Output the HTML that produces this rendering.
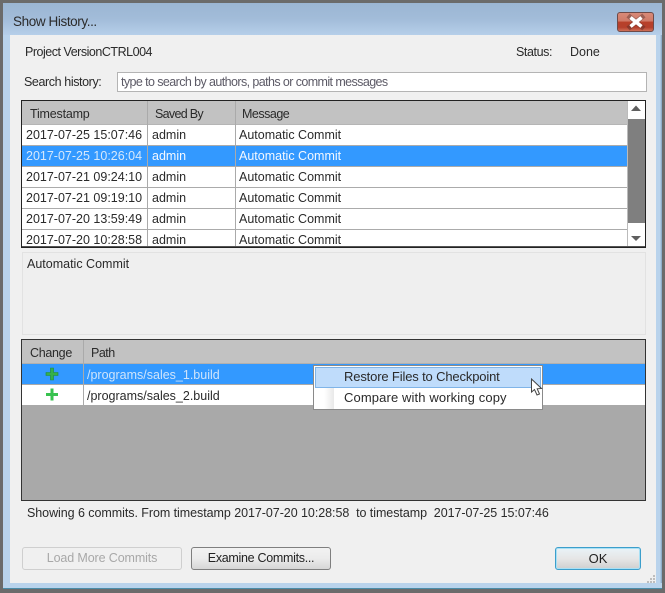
<!DOCTYPE html>
<html><head><meta charset="utf-8"><style>
html,body{margin:0;padding:0}
#w{position:relative;width:665px;height:593px;overflow:hidden;background:#b9d3ec;font-family:"Liberation Sans",sans-serif;font-size:12.5px;color:#2a2a2a}
#w div{position:absolute;box-sizing:border-box}
.t{white-space:nowrap;line-height:16px;height:16px}
.sep{left:1px;width:605px;height:1px;background:#ababab}
.v{width:1px;background:#aaa}
.sel{background:#3399ff}
.btn{border-radius:3px;text-align:center;line-height:21px;height:23px;font-size:12.5px}
</style></head><body><div id="w">
<div style="left:0;top:0;width:665px;height:593px;border:3px solid #6b6b6b;border-width:3px 3px 4px 3px"></div>
<div style="left:3px;top:3px;width:659px;height:32px;background:linear-gradient(#9bb6d3,#a2bcd9 50%,#b6cfe9)"></div>
<div style="left:3px;top:35px;width:7px;height:550px;background:#b9d3ec"></div>
<div style="left:656px;top:35px;width:6px;height:554px;background:linear-gradient(90deg,#b9d3ec,#b9d3ec 4px,#7fa0bd)"></div>
<div style="left:3px;top:583px;width:659px;height:6px;background:#b9d3ec;border-bottom:1px solid #4a8ca8"></div>
<div class="t" style="left:13px;top:14px;font-size:13.5px;letter-spacing:-.4px;color:#2b2b2b">Show History...</div>

<div style="left:617px;top:12px;width:37px;height:20px;border:1px solid #6e4a48;border-radius:3px;background:linear-gradient(#d98a78,#cf7a68 45%,#b8402a 50%,#b5402c 80%,#cf7058)"></div>
<svg style="position:absolute;left:617px;top:12px" width="37" height="20"><path d="M13 5 L25 15 M25 5 L13 15" stroke="#4b2a28" stroke-width="5" stroke-linecap="square" opacity=".4"/><path d="M13.5 5.5 L24.5 14.5 M24.5 5.5 L13.5 14.5" stroke="#fff" stroke-width="3.6"/></svg>

<div style="left:10px;top:35px;width:646px;height:548px;background:#f0f0f0"></div>
<div class="t" style="left:25px;top:44px;letter-spacing:-.48px">Project VersionCTRL004</div>
<div class="t" style="left:516px;top:44px;letter-spacing:-.4px">Status:</div>
<div class="t" style="left:570px;top:44px">Done</div>
<div class="t" style="left:24px;top:74px;letter-spacing:-.4px">Search history:</div>
<div style="left:117px;top:72px;width:530px;height:20px;background:#fff;border:1px solid #b4b4b4"></div>
<div class="t" style="left:121px;top:74px;font-size:12.5px;color:#5c5a66;letter-spacing:-.59px">type to search by authors, paths or commit messages</div>

<!-- table 1 -->
<div style="left:21px;top:100px;width:625px;height:148px;background:#fff;border:1px solid #222">
  <div style="left:0;top:0;width:605px;height:23px;background:#c2c2c2"></div>
  <div class="sep" style="left:0;top:23px;background:#b5b5b5"></div>
  <div class="sel" style="left:0;top:45px;width:605px;height:20px"></div>
  <div class="sep" style="left:0;top:44px"></div>
  <div class="sep" style="left:0;top:65px"></div>
  <div class="sep" style="left:0;top:86px"></div>
  <div class="sep" style="left:0;top:107px"></div>
  <div class="sep" style="left:0;top:128px"></div>
  <div class="v" style="left:125px;top:0;height:146px"></div>
  <div class="v" style="left:213px;top:0;height:146px"></div>
  <div class="v" style="left:605px;top:0;height:146px;background:#bbb"></div>
  <div style="left:606px;top:18px;width:17px;height:104px;background:#7f7f7f"></div>
  <div style="left:0;top:145px;width:623px;height:1px;background:#555"></div>
</div>
<svg style="position:absolute;left:627px;top:100px" width="18" height="148"><path d="M4 11 L9 5.5 L14 11Z" fill="#5f5f5f"/><path d="M4 136 L14 136 L9 141Z" fill="#5f5f5f"/></svg>
<div class="t" style="left:30px;top:106px;letter-spacing:-.2px">Timestamp</div>
<div class="t" style="left:155px;top:106px;letter-spacing:-.7px">Saved By</div>
<div class="t" style="left:242px;top:106px;letter-spacing:-.5px">Message</div>
<div class="t" style="left:26px;top:127px">2017-07-25 15:07:46</div><div class="t" style="left:152px;top:127px">admin</div><div class="t" style="left:239px;top:127px">Automatic Commit</div>
<div class="t" style="left:26px;top:148px;color:#d6e8fb">2017-07-25 10:26:04</div><div class="t" style="left:152px;top:148px;color:#f4f8ff">admin</div><div class="t" style="left:239px;top:148px;color:#f4f8ff">Automatic Commit</div>
<div class="t" style="left:26px;top:169px">2017-07-21 09:24:10</div><div class="t" style="left:152px;top:169px">admin</div><div class="t" style="left:239px;top:169px">Automatic Commit</div>
<div class="t" style="left:26px;top:190px">2017-07-21 09:19:10</div><div class="t" style="left:152px;top:190px">admin</div><div class="t" style="left:239px;top:190px">Automatic Commit</div>
<div class="t" style="left:26px;top:211px">2017-07-20 13:59:49</div><div class="t" style="left:152px;top:211px">admin</div><div class="t" style="left:239px;top:211px">Automatic Commit</div>
<div class="t" style="left:26px;top:232px">2017-07-20 10:28:58</div><div class="t" style="left:152px;top:232px">admin</div><div class="t" style="left:239px;top:232px">Automatic Commit</div>

<!-- details -->
<div style="left:22px;top:252px;width:624px;height:83px;background:#efefef;border:1px solid #e2e2e2"></div>
<div class="t" style="left:27px;top:256px">Automatic Commit</div>

<!-- table 2 -->
<div style="left:21px;top:339px;width:625px;height:162px;background:#a9a9a9;border:1px solid #333">
  <div style="left:0;top:0;width:623px;height:23px;background:#c2c2c2"></div>
  <div class="sel" style="left:0;top:24px;width:623px;height:20px"></div>
  <div style="left:0;top:45px;width:623px;height:20px;background:#fff"></div>
  <div style="left:0;top:23px;width:623px;height:1px;background:#b0b0b0"></div>
  <div style="left:61px;top:0;width:1px;height:65px;background:#aaa"></div>
</div>
<div class="t" style="left:30px;top:345px;letter-spacing:-.3px">Change</div>
<div class="t" style="left:91px;top:345px;letter-spacing:-.5px">Path</div>
<svg style="position:absolute;left:45px;top:367px" width="15" height="36">
<path d="M5.5 1h3v4.5H13v3H8.500V13h-3V8.500H1v-3h4.500z" fill="#35b04a" stroke="#1f8a33" stroke-width=".6"/>
<path d="M5.500 21.500h3V26H13v3H8.500v4.500h-3V29H1v-3h4.500z" fill="#37c24f"/>
</svg>
<div class="t" style="left:87px;top:367px;color:#cfe4fb">/programs/sales_1.build</div>
<div class="t" style="left:87px;top:388px">/programs/sales_2.build</div>

<!-- menu -->
<div style="left:313px;top:365px;width:230px;height:45px;background:#fff;border:1px solid #8a8a8a">
  <div style="left:1px;top:1px;width:226px;height:21px;background:#bfdcfb;border:1px solid #7fb4e8"></div>
  <div style="left:10px;top:22px;width:10px;height:21px;background:linear-gradient(90deg,#fff,#e9e9e9)"></div>
</div>
<div class="t" style="left:344px;top:369px;font-size:13px;letter-spacing:-.15px">Restore Files to Checkpoint</div>
<div class="t" style="left:344px;top:390px;font-size:13px;letter-spacing:.12px">Compare with working copy</div>
<svg style="position:absolute;left:530px;top:378px" width="14" height="20"><path d="M1.500 1 L1.500 14 L4.500 11.500 L7 17 L9.500 16 L7.200 10.800 L11.500 10.500 Z" fill="#fff" stroke="#444" stroke-width="1"/></svg>

<div class="t" style="left:27px;top:505px;letter-spacing:-.055px">Showing 6 commits. From timestamp 2017-07-20 10:28:58&nbsp; to timestamp&nbsp; 2017-07-25 15:07:46</div>

<div class="btn" style="left:22px;top:547px;width:160px;background:#f0f0f0;border:1px solid #cfcfcf;color:#a8a8a8;letter-spacing:-.12px">Load More Commits</div>
<div class="btn" style="left:191px;top:547px;width:140px;background:linear-gradient(#f2f2f2,#ebebeb 50%,#d6d6d6);border:1px solid #7f7f7f;color:#222;letter-spacing:-.3px">Examine Commits...</div>
<div class="btn" style="left:555px;top:547px;width:86px;background:linear-gradient(#e9f3f8,#e6e6e6 50%,#cfcfcf);border:1px solid #3c9ecb;box-shadow:inset 0 0 0 1px #a8e0f5;color:#222;font-size:13px">OK</div>
<svg style="position:absolute;left:646px;top:574px" width="10" height="10"><g fill="#bdbdbd"><rect x="7" y="1" width="2" height="2"/><rect x="4" y="4" width="2" height="2"/><rect x="7" y="4" width="2" height="2"/><rect x="1" y="7" width="2" height="2"/><rect x="4" y="7" width="2" height="2"/><rect x="7" y="7" width="2" height="2"/></g></svg>
</div></body></html>
